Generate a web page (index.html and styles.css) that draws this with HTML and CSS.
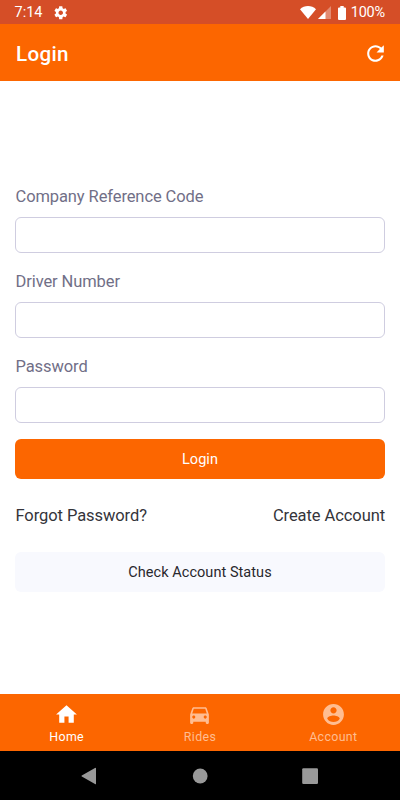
FILE: index.html
```html
<!DOCTYPE html>
<html lang="en">
<head>
<meta charset="utf-8">
<meta name="viewport" content="width=device-width, initial-scale=1">
<title>Login</title>
<link rel="stylesheet" href="styles.css">
</head>
<body>
<div class="status">
  <span class="time">7:14</span>
  <svg class="gear" viewBox="0 0 24 24"><path d="M19.43 12.98c.04-.32.07-.64.07-.98s-.03-.66-.07-.98l2.11-1.65c.19-.15.24-.42.12-.64l-2-3.46c-.12-.22-.39-.3-.61-.22l-2.49 1c-.52-.4-1.08-.73-1.69-.98l-.38-2.65C14.46 2.18 14.25 2 14 2h-4c-.25 0-.46.18-.49.42l-.38 2.65c-.61.25-1.17.59-1.69.98l-2.49-1c-.23-.09-.49 0-.61.22l-2 3.46c-.13.22-.07.49.12.64l2.11 1.65c-.04.32-.07.65-.07.98s.03.66.07.98l-2.11 1.65c-.19.15-.24.42-.12.64l2 3.46c.12.22.39.3.61.22l2.49-1c.52.4 1.08.73 1.69.98l.38 2.65c.03.24.24.42.49.42h4c.25 0 .46-.18.49-.42l.38-2.65c.61-.25 1.17-.59 1.69-.98l2.49 1c.23.09.49 0 .61-.22l2-3.46c.12-.22.07-.49-.12-.64l-2.11-1.65zM12 15.5c-1.93 0-3.5-1.57-3.5-3.5s1.57-3.5 3.5-3.5 3.5 1.57 3.5 3.5-1.57 3.5-3.5 3.5z"/></svg>
  <svg class="wifi" viewBox="0 0 16 13"><path d="M8 13 0 3.200C2.200 1.200 5 0 8 0s5.800 1.200 8 3.200z"/></svg>
  <svg class="signal" viewBox="0 0 13 13"><path opacity=".35" d="M13 0v13H0z"/><path d="M7.500 5.500V13H0z"/></svg>
  <svg class="battery" viewBox="0 0 8 14"><path d="M2.300 0h3.400v1.500H7a1 1 0 0 1 1 1V13a1 1 0 0 1-1 1H1a1 1 0 0 1-1-1V2.500a1 1 0 0 1 1-1h1.300z"/></svg>
  <span class="percent">100%</span>
</div>
<header class="appbar">
  <h1>Login</h1>
  <svg class="refresh" viewBox="0 0 24 24"><path d="M17.650 6.350C16.200 4.900 14.210 4 12 4c-4.420 0-7.990 3.580-7.990 8s3.570 8 7.990 8c3.730 0 6.840-2.550 7.730-6h-2.080c-.82 2.330-3.040 4-5.650 4-3.310 0-6-2.690-6-6s2.690-6 6-6c1.660 0 3.140.69 4.220 1.780L13 11h7V4l-2.350 2.350z"/></svg>
</header>
<main class="form">
  <label class="field"><span>Company Reference Code</span><input type="text"></label>
  <label class="field"><span>Driver Number</span><input type="text"></label>
  <label class="field"><span>Password</span><input type="password"></label>
  <button class="btn primary" type="button">Login</button>
  <div class="links"><a>Forgot Password?</a><a>Create Account</a></div>
  <button class="btn secondary" type="button">Check Account Status</button>
</main>
<nav class="tabs">
  <div class="tab active"><svg viewBox="0 0 24 24"><path d="M10 20v-6h4v6h5v-8h3L12 3 2 12h3v8z"/></svg><span>Home</span></div>
  <div class="tab"><svg viewBox="0 0 24 24"><path d="M18.920 6.010C18.720 5.420 18.160 5 17.500 5h-11c-.66 0-1.210.42-1.420 1.010L3 12v8c0 .55.45 1 1 1h1c.55 0 1-.45 1-1v-1h12v1c0 .55.45 1 1 1h1c.55 0 1-.45 1-1v-8l-2.080-5.990zM6.500 16c-.83 0-1.500-.67-1.500-1.500S5.670 13 6.500 13s1.500.67 1.500 1.500S7.330 16 6.500 16zm11 0c-.83 0-1.500-.67-1.500-1.500s.67-1.500 1.500-1.500 1.500.67 1.500 1.500-.67 1.500-1.500 1.500zM5 11l1.500-4.500h11L19 11H5z"/></svg><span>Rides</span></div>
  <div class="tab"><svg viewBox="0 0 24 24"><path d="M12 2C6.480 2 2 6.480 2 12s4.480 10 10 10 10-4.480 10-10S17.520 2 12 2zm0 3c1.660 0 3 1.340 3 3s-1.340 3-3 3-3-1.340-3-3 1.340-3 3-3zm0 14.200c-2.500 0-4.710-1.280-6-3.220.03-1.990 4-3.080 6-3.080 1.990 0 5.970 1.090 6 3.080-1.290 1.940-3.500 3.220-6 3.220z"/></svg><span>Account</span></div>
</nav>
<div class="system">
  <svg viewBox="0 0 20 20"><path d="M16 2.200v15.600a.6.6 0 0 1-1 .2L1.800 10.500a.6.6 0 0 1 0-1L15 2a.6.6 0 0 1 1 .2z"/></svg>
  <svg viewBox="0 0 20 20"><circle cx="10.200" cy="10" r="7.400"/></svg>
  <svg viewBox="0 0 20 20"><rect x="2.200" y="2.200" width="15.800" height="15.800" rx="1.200"/></svg>
</div>
</body>
</html>
```

FILE: styles.css
```css
* { box-sizing: border-box; }
body {
  margin: 0;
  width: 400px;
  height: 800px;
  display: flex;
  flex-direction: column;
  overflow: hidden;
  background: #fff;
  font-family: Roboto, "Liberation Sans", sans-serif;
}
svg { display: block; fill: currentColor; flex: none; }
.status {
  height: 24px;
  flex: none;
  display: flex;
  align-items: center;
  padding: 1px 15px 0 14.500px;
  background: #d54e27;
  color: #fff;
  font-size: 14.500px;
}
.gear { width: 15.500px; height: 15.500px; margin-left: 10.500px; }
.wifi { width: 16px; height: 13px; margin-left: auto; }
.signal { width: 13px; height: 13px; margin-left: 2px; }
.battery { width: 8px; height: 14px; margin: 0 5px 0 7px; }
.percent { letter-spacing: -.2px; }
.appbar {
  height: 57.300px;
  flex: none;
  display: flex;
  align-items: center;
  justify-content: space-between;
  padding: 2px 12px 0 16px;
  background: #fc6600;
  color: #fff;
}
h1 { margin: 0; font-size: 20.600px; font-weight: 500; letter-spacing: .3px; }
.refresh { width: 25px; height: 25px; }
.form {
  flex: 1;
  display: flex;
  flex-direction: column;
  padding: 104px 15px 0;
}
.field { display: block; height: 85.100px; color: #716f87; font-size: 16.500px; line-height: 23px; }
.field span { display: block; padding-left: .5px; letter-spacing: -.1px; }
.field input {
  display: block;
  width: 370px;
  height: 36px;
  margin: 9px 0 0;
  padding: 0 12px;
  border: 1px solid #cfcde0;
  border-radius: 6px;
  background: #fff;
  font: inherit;
}
.btn {
  width: 370px;
  height: 40px;
  flex: none;
  margin: 0;
  padding: 1px 0 0;
  border: 0;
  border-radius: 6px;
  font: 400 14.500px/39px Roboto, sans-serif;
  letter-spacing: .05px;
}
.primary { margin-top: -1.500px; background: #fc6600; color: #fff; }
.secondary { background: #f8f9fe; color: #28282d; }
.links {
  height: 73px;
  flex: none;
  display: flex;
  justify-content: space-between;
  align-items: center;
  padding: 0 0 1px .5px;
  color: #34343a;
  font-size: 16.500px;
  letter-spacing: -.08px;
}
.tabs {
  height: 57px;
  flex: none;
  display: grid;
  grid-template-columns: repeat(3, 1fr);
  background: #fc6600;
}
.tab {
  display: flex;
  flex-direction: column;
  align-items: center;
  padding-top: 8px;
  color: #ffbd91;
  font-size: 12.400px;
  line-height: 16px;
  letter-spacing: .35px;
}
.tab svg { width: 25px; height: 25px; }
.tab span { margin-top: 2px; }
.active { color: #fff; }
.system {
  height: 49px;
  flex: none;
  display: flex;
  justify-content: center;
  align-items: center;
  gap: 90px;
  background: #000;
  color: #999;
}
.system svg { width: 20px; height: 20px; }
```
